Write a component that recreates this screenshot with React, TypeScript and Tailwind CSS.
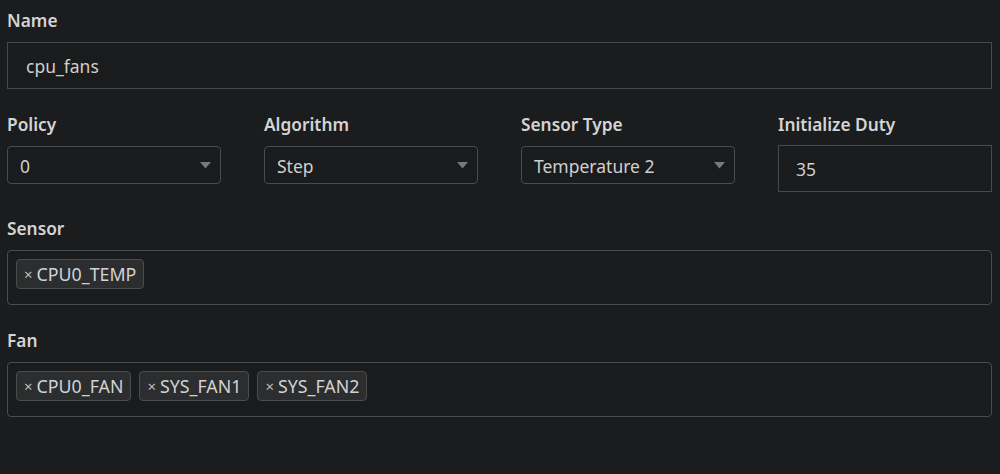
import type { ReactNode } from 'react'

const font = { fontFamily: '"Noto Sans", "Open Sans", sans-serif' }

function Label({ children }: { children: ReactNode }) {
  return <p className="h-6 leading-6 text-[17.3px] font-semibold text-[#d4d4d4] mb-[9px]">{children}</p>
}

function Select({ value }: { value: string }) {
  return (
    <div className="flex h-[38px] items-center justify-between rounded-[4px] border border-[#4a4b4d] bg-[#1a1b1c] pl-3 pr-[9px] text-[17.5px] text-[#cfcfcf]">
      <span className="pt-[3px]">{value}</span>
      <svg width="11" height="7" viewBox="0 0 11 7">
        <path d="M0 0 H11 L5.5 6.5 Z" fill="#77797b" />
      </svg>
    </div>
  )
}

function Chip({ label }: { label: string }) {
  return (
    <span className="flex h-[30px] items-center gap-1 rounded-[4px] border border-[#4a4c4e] bg-[#2b2d2f] pl-[7px] pr-[7px] text-[17.8px] text-[#d2d2d2]">
      <span className="text-[15px] text-[#bdbdbd]">×</span>
      {label}
    </span>
  )
}

function TagBox({ tags }: { tags: string[] }) {
  return (
    <div className="flex h-[55px] items-start gap-2 rounded-[4px] border border-[#4a4b4d] bg-[#1a1b1c] px-2 pt-2">
      {tags.map((t) => <Chip key={t} label={t} />)}
    </div>
  )
}

export default function App() {
  return (
    <main className="min-h-screen w-[1000px] h-[474px] bg-[#1b1c1d] px-[7px] pt-[9px]" style={font}>
      <div className="w-[985px] flex flex-col">
        <section>
          <Label>Name</Label>
          <div className="flex h-[47px] items-center border border-[#48494b] bg-[#1a1b1c] pl-[18px] pt-[2px] text-[17.5px] text-[#cfcfcf]">
            cpu_fans
          </div>
        </section>

        <section className="mt-6 grid grid-cols-4 gap-x-[43px] items-start">
          <div>
            <Label>Policy</Label>
            <Select value="0" />
          </div>
          <div>
            <Label>Algorithm</Label>
            <Select value="Step" />
          </div>
          <div>
            <Label>Sensor Type</Label>
            <Select value="Temperature 2" />
          </div>
          <div>
            <Label>Initialize Duty</Label>
            <div className="-mt-px flex h-[47px] items-center border border-[#48494b] bg-[#1a1b1c] pl-[17px] pt-[2px] text-[17.5px] text-[#cfcfcf]">
              35
            </div>
          </div>
        </section>

        <section className="mt-[25px]">
          <Label>Sensor</Label>
          <TagBox tags={['CPU0_TEMP']} />
        </section>

        <section className="mt-6">
          <Label>Fan</Label>
          <TagBox tags={['CPU0_FAN', 'SYS_FAN1', 'SYS_FAN2']} />
        </section>
      </div>
    </main>
  )
}
